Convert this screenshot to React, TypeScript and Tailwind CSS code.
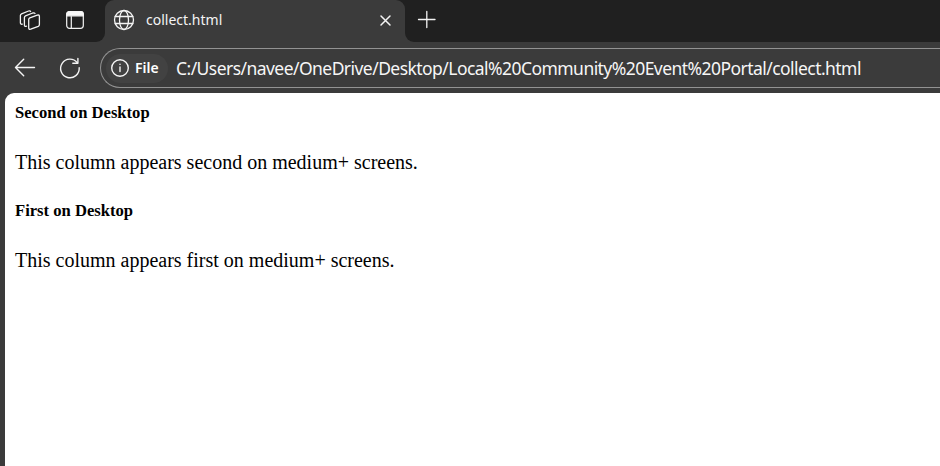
import React from "react";

const stroke = { fill: "none", stroke: "#f4f4f4", strokeLinecap: "round", strokeLinejoin: "round" } as const;

function WorkspacesIcon() {
  return (
    <svg width="22" height="22" viewBox="0 0 22 22" {...stroke} strokeWidth="1.3">
      <path d="M9.700 10.600 Q9.700 9.300 10.800 8.800 L18.300 6.200 Q20.400 5.500 20.400 7.500 V15.600 Q20.400 16.800 19.300 17.300 L11.700 20.200 Q9.700 20.800 9.700 18.800 Z" />
      <path d="M7.500 17.200 Q5.400 18 5.400 15.900 V8.600 Q5.400 7.300 6.500 6.800 L13.700 4 Q15.500 3.500 16 4.500" />
      <path d="M3.300 15.200 Q1.400 15.600 1.400 13.700 V6.600 Q1.400 5.300 2.500 4.800 L9.600 2 Q11.200 1.500 11.600 2.500" />
    </svg>
  );
}

function TabActionsIcon() {
  return (
    <svg width="20" height="20" viewBox="0 0 20 20" {...stroke} strokeWidth="1.2">
      <rect x="1.700" y="1.700" width="16.600" height="16.600" rx="2.800" />
      <path d="M1.700 5.800 V4.500 Q1.700 1.700 4.500 1.700 H15.500 Q18.300 1.700 18.300 4.500 V5.800 Z" fill="#f8f8f8" />
      <path d="M6.300 6.500 V18" />
    </svg>
  );
}

function GlobeIcon() {
  return (
    <svg width="22" height="22" viewBox="0 0 22 22" {...stroke} strokeWidth="1.3">
      <circle cx="11" cy="11" r="9.500" />
      <ellipse cx="11" cy="11" rx="4.500" ry="9.500" />
      <path d="M2.200 7.500 H19.800 M2.200 14.500 H19.800" />
    </svg>
  );
}

function TabStrip() {
  return (
    <div className="flex h-[42px] shrink-0">
      <div className="flex w-[105px] shrink-0 rounded-br-[9px] bg-[#202020] pl-[19px] pt-[9px]">
        <WorkspacesIcon />
        <div className="pl-[24px] pt-px"><TabActionsIcon /></div>
      </div>
      <div className="w-[300px] shrink-0 bg-[linear-gradient(#202020_50%,#3b3b3b_50%)]">
        <div className="flex h-full items-center rounded-t-[9px] bg-[#3b3b3b] pb-[2px] pl-[8px] pr-[12px]">
          <GlobeIcon />
          <span className="ml-[11px] font-['Noto_Sans','Open_Sans',sans-serif] text-[14px] leading-5 text-[#f4f4f4]">collect.html</span>
          <svg className="ml-auto" width="16" height="16" viewBox="0 0 16 16" {...stroke} strokeWidth="1.500">
            <path d="M4 4 L13 13 M13 4 L4 13" />
          </svg>
        </div>
      </div>
      <div className="flex-1 rounded-bl-[9px] bg-[#202020] pl-[12px] pt-[9px]">
        <svg width="20" height="20" viewBox="0 0 20 20" {...stroke} strokeWidth="1.300">
          <path d="M1.500 10.500 H18 M9.800 2.500 V18.500" />
        </svg>
      </div>
    </div>
  );
}

function AddressBar() {
  return (
    <div className="flex h-[51px] shrink-0 items-start pt-[6px]">
      <div className="flex h-[40px] w-[100px] shrink-0 items-center pl-[13px]">
        <svg width="24" height="24" viewBox="0 0 24 24" {...stroke} strokeWidth="1.400">
          <path d="M21.500 11.500 H2.500 M10.700 3.200 L2.500 11.500 L10.700 19.800" />
        </svg>
        <svg className="ml-[20px]" width="24" height="24" viewBox="0 0 24 24" {...stroke} strokeWidth="1.400">
          <path d="M22.200 11.800 A9.300 9.300 0 1 1 20.300 6.800" />
          <path d="M20.900 2.500 V7.300 H15.800" />
        </svg>
      </div>
      <div className="flex h-[40px] flex-1 items-center rounded-l-full border border-r-0 border-[#929292] pl-[5px]">
        <div className="flex h-[29px] w-[62px] items-center rounded-full bg-[#424242] pl-[4px]">
          <svg className="shrink-0" width="20" height="20" viewBox="0 0 20 20" {...stroke} strokeWidth="1.400">
            <circle cx="10" cy="10" r="8.300" />
            <path d="M10 9 V13.500 M10 6.300 V6.400" />
          </svg>
          <span className="ml-[5px] font-['Noto_Sans','Open_Sans',sans-serif] text-[14px] font-semibold leading-5 text-white">File</span>
        </div>
        <span className="ml-[8px] whitespace-nowrap font-['Noto_Sans','Open_Sans',sans-serif] text-[17.5px] leading-6 tracking-[-0.55px] text-[#f6f6f6]">C:/Users/navee/OneDrive/Desktop/Local%20Community%20Event%20Portal/collect.html</span>
      </div>
    </div>
  );
}

function Column({ title, children }: { title: string; children: React.ReactNode }) {
  return (
    <section className="h-[98px]">
      <h5 className="text-[16.6px] font-bold leading-[19px]">{title}</h5>
      <p className="mt-[29px] text-[20px] leading-[23px]">{children}</p>
    </section>
  );
}

export default function App() {
  return (
    <div className="flex h-[466px] w-[940px] flex-col overflow-hidden bg-[#3b3b3b]">
      <TabStrip />
      <AddressBar />
      <main className="ml-[5px] flex-1 rounded-tl-[9px] bg-white pl-[10px] pt-[10px] font-['Liberation_Serif',serif] text-black">
        <Column title="Second on Desktop">This column appears second on medium+ screens.</Column>
        <Column title="First on Desktop">This column appears first on medium+ screens.</Column>
      </main>
    </div>
  );
}
